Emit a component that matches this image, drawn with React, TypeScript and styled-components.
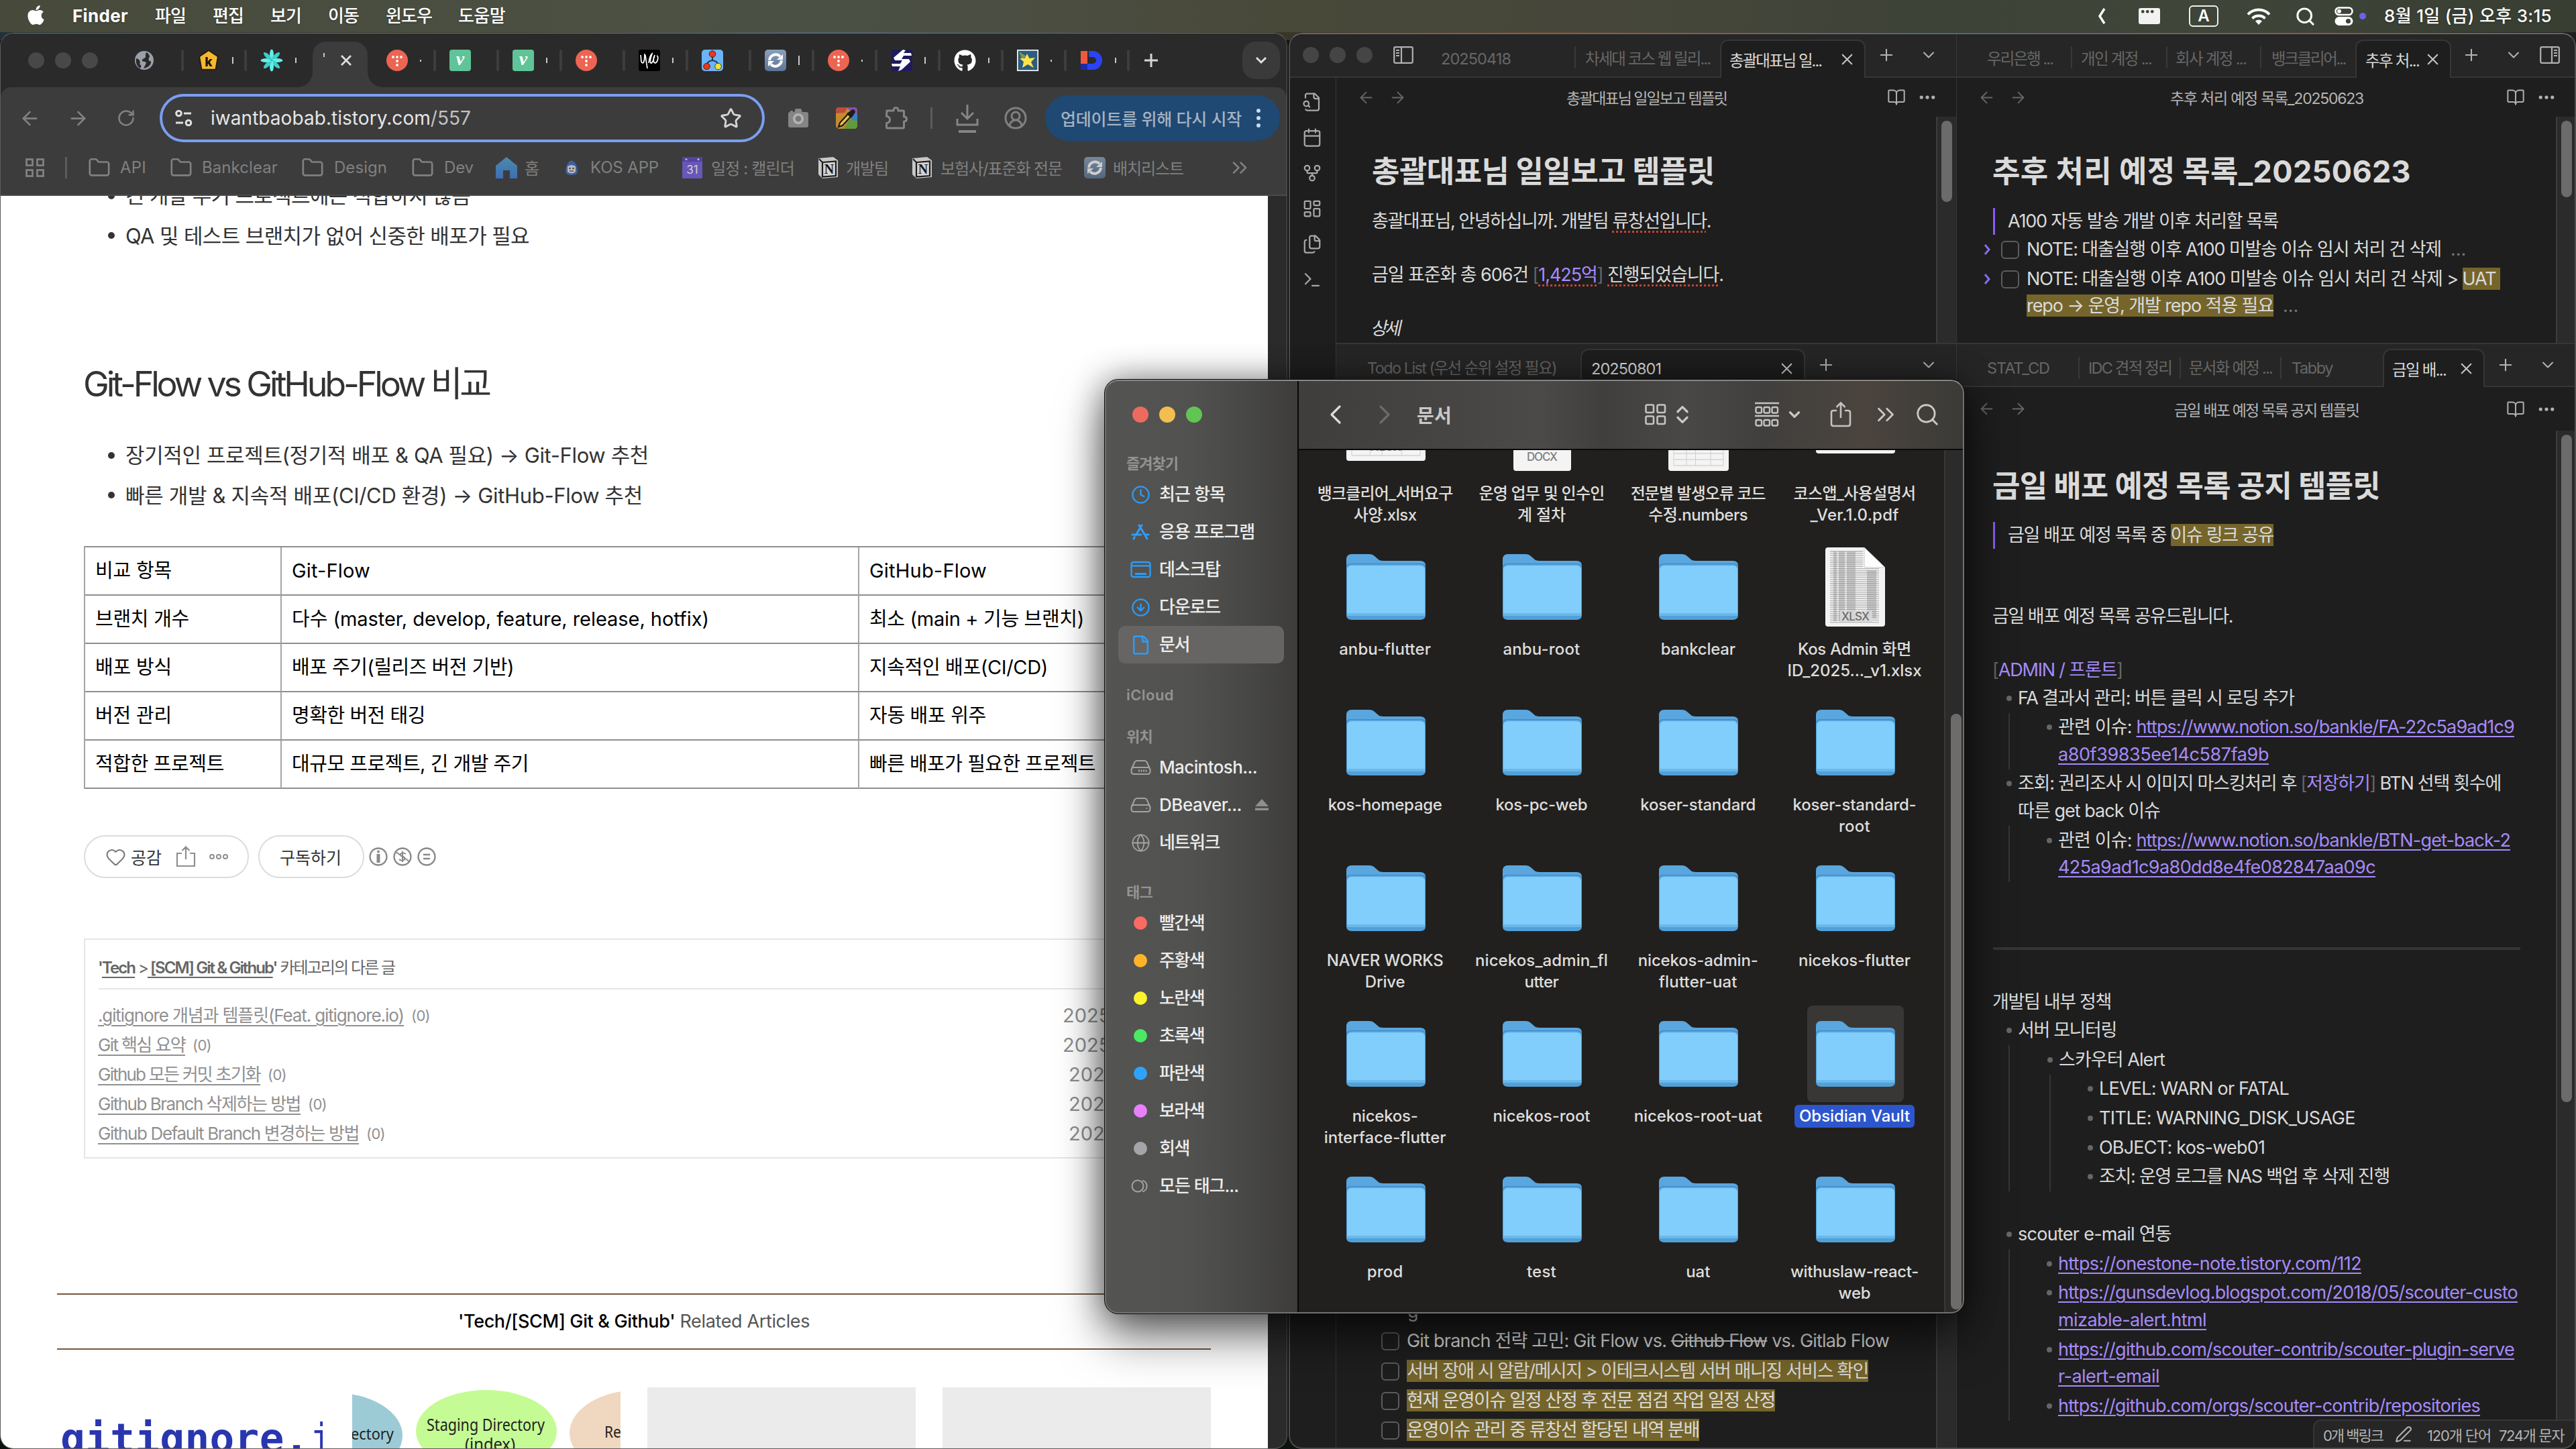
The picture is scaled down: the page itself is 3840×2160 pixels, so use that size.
import React, { useLayoutEffect, useRef, useState, ReactNode } from 'react';
import styled, { createGlobalStyle, css } from 'styled-components';
import {
  ArrowLeft, ArrowRight, BookOpen, Calendar, ChevronDown, ChevronLeft, ChevronRight, ChevronsRight,
  ChevronsUpDown, CircleArrowDown, CircleUserRound, Clock, Ellipsis, File, Files, Folder,
  GitFork, Globe, Heart, LayoutDashboard, Plus, RotateCw, Search,
  Star, Terminal, X, PenLine,
} from 'lucide-react';
import { FaApple, FaGithub } from 'react-icons/fa';

const Global = createGlobalStyle`
  * { box-sizing: border-box; }
  html, body { margin: 0; padding: 0; background: #161c1a; overflow: hidden; }
  body { font-family: Inter, "Noto Sans CJK KR", "Noto Sans", sans-serif; font-kerning: normal; }
  svg { display: block; flex: none; }
`;

/* ---------- text run tracked to a given measure ---------- */

const Run = styled.span`
  display: inline-block;
  flex: none;
  white-space: pre;
  margin: 0 -1px;
`;

function Fit({ w, children }: { w: number; children: ReactNode }) {
  const ref = useRef<HTMLSpanElement>(null);
  const [tracking, setTracking] = useState(0);
  useLayoutEffect(() => {
    const el = ref.current;
    if (!el) return;
    const natural = el.getBoundingClientRect().width;
    const count = Math.max(1, (el.textContent || '').length);
    setTracking((w + 2 - natural) / count);
  }, []);
  return <Run ref={ref} style={{ letterSpacing: `${tracking}px` }}>{children}</Run>;
}

/* ---------- shared parts ---------- */

const Desktop = styled.div`
  position: relative;
  width: 3840px;
  height: 2160px;
  overflow: hidden;
  background: linear-gradient(90deg, #22303a 0, #3f3a2a 20%, #47616e 32%, #3a3527 50%, #6b4528 60%, #2c3b40 75%, #4a3d2c 90%, #1c2022 100%) 0 0 / 100% 60px no-repeat, #0d140f;
`;

const Cell = styled.div<{ $ml?: number; $w?: number }>`
  display: flex;
  flex: none;
  align-items: center;
  justify-content: center;
  width: ${(p) => p.$w ?? 40}px;
  height: 40px;
  margin-left: ${(p) => p.$ml ?? 0}px;
`;

const EndCell = styled(Cell)`
  margin-left: auto;
`;

const Gap = styled.div<{ $w: number }>`
  flex: none;
  width: ${(p) => p.$w}px;
`;

const Space = styled.div<{ $h: number }>`
  flex: none;
  height: ${(p) => p.$h}px;
`;

const Light = styled.div<{ $c: string }>`
  flex: none;
  width: 24px;
  height: 24px;
  border-radius: 50%;
  background: ${(p) => p.$c};
`;

const Lights = styled.div<{ $ml?: number }>`
  display: flex;
  flex: none;
  gap: 16px;
  margin-left: ${(p) => p.$ml ?? 0}px;
`;

/* ---------- menu bar ---------- */

const MenuBar = styled.div`
  display: flex;
  align-items: center;
  height: 48px;
  padding-left: 37px;
  color: #fff;
  font-size: 26px;
  font-weight: 500;
  line-height: 48px;
  background: linear-gradient(90deg, #474a3b 0, #4c5144 26%, #4b5045 33%, #49493a 50%, #46473a 62%, #3e4337 75%, #3f4538 85%, #383e32 100%);
  text-shadow: 0 1px 3px rgba(0, 0, 0, 0.3);
`;

const AppleMark = styled.div`
  width: 33px;
  padding-bottom: 3px;
`;

const AppName = styled.span`
  font-weight: 700;
`;

const InputBox = styled.div`
  display: flex;
  align-items: center;
  justify-content: center;
  width: 44px;
  height: 32px;
  border: 2px solid #eee;
  border-radius: 6px;
  font-size: 24px;
  font-weight: 600;
  line-height: 28px;
`;

function Menu() {
  return (
    <MenuBar>
      <AppleMark><FaApple size={33} /></AppleMark>
      <Gap $w={39} />
      <AppName><Fit w={81}>Finder</Fit></AppName>
      <Gap $w={42} /><Fit w={44}>파일</Fit>
      <Gap $w={42} /><Fit w={44}>편집</Fit>
      <Gap $w={42} /><Fit w={44}>보기</Fit>
      <Gap $w={42} /><Fit w={44}>이동</Fit>
      <Gap $w={42} /><Fit w={67}>윈도우</Fit>
      <Gap $w={41} /><Fit w={68}>도움말</Fit>
      <Gap $w={2361} />
      <Cell>
        <svg width="14" height="26" viewBox="0 0 14 26" fill="none" stroke="#fff" strokeWidth="3.4"><path d="M11 2 L4 13 L11 24" /></svg>
      </Cell>
      <Cell $ml={31}>
        <svg width="34" height="28" viewBox="0 0 34 28"><rect x="1" y="2" width="32" height="24" rx="3" fill="#f2f2f0" />{[7, 14, 21].map((x) => <rect key={x} x={x - 2} y="5" width="4.5" height="4.5" rx="2" fill="#3b4035" />)}</svg>
      </Cell>
      <Gap $w={39} />
      <InputBox>A</InputBox>
      <Cell $ml={40}>
        <svg width="38" height="28" viewBox="0 0 38 28" fill="none" stroke="#fff" strokeWidth="4">
          <path d="M3 11.5 A22 22 0 0 1 35 11.5" /><path d="M9.5 17.5 A13.5 13.5 0 0 1 28.5 17.5" /><path d="M19 27 L14 21.5 A7 7 0 0 1 24 21.5 Z" fill="#fff" stroke="none" />
        </svg>
      </Cell>
      <Cell $ml={29}><Search size={31} strokeWidth={2.3} /></Cell>
      <Cell $ml={18}>
        <svg width="28" height="28" viewBox="0 0 28 28"><rect x="1.5" y="1.5" width="25" height="10.5" rx="5.2" fill="none" stroke="#fff" strokeWidth="2.6" /><circle cx="7" cy="6.8" r="3" fill="#fff" /><rect x="0.5" y="15" width="27" height="13" rx="6.5" fill="#fff" /><circle cx="20.5" cy="21.5" r="3.6" fill="#3d4237" /></svg>
      </Cell>
      <Gap $w={3} />
      <svg width="10" height="12"><ellipse cx="5" cy="6" rx="5" ry="5" fill="#6a62ee" /></svg>
      <Gap $w={28} />
      <Fit w={248}>8월 1일 (금) 오후 3:15</Fit>
    </MenuBar>
  );
}

/* ---------- browser ---------- */

const ChromeWindow = styled.div`
  position: absolute;
  left: 0;
  top: 49px;
  display: flex;
  flex-direction: column;
  width: 1919px;
  height: 2111px;
  border-radius: 20px;
  overflow: hidden;
  background: #2b2b2b;
  border: 1px solid #5c5c5c;
  border-top-color: #707070;
`;

const TabStrip = styled.div`
  display: flex;
  align-items: center;
  flex: none;
  height: 80px;
  padding-left: 41px;
  background: #2a2a2a;
`;

const BrowserTab = styled.div`
  display: flex;
  flex: none;
  align-items: center;
  width: 94px;
  height: 32px;
  padding-left: 22px;
`;

const TabSliver = styled.div<{ $h: number; $active?: boolean }>`
  width: 2px;
  height: ${(p) => p.$h}px;
  margin: ${(p) => (p.$active ? '-16px 0 0 0' : '0 0 0 18px')};
  background: #c8c8c8;
`;

const TabDivider = styled.div`
  width: 4px;
  height: 32px;
  margin: 0 -2px 0 auto;
  border-radius: 2px;
  background: #3d3d3d;
`;

const ActiveBrowserTab = styled.div`
  position: relative;
  display: flex;
  flex: none;
  align-items: center;
  align-self: flex-end;
  width: 82px;
  height: 68px;
  margin: 0 6px;
  padding: 0 0 12px 16px;
  border-radius: 20px 20px 0 0;
  background: #3c3c3c;
  &::before, &::after {
    content: '';
    position: absolute;
    bottom: 0;
    width: 22px;
    height: 22px;
  }
  &::before { left: -22px; background: radial-gradient(circle at 0 0, transparent 21.5px, #3c3c3c 22px); }
  &::after { right: -22px; background: radial-gradient(circle at 100% 0, transparent 21.5px, #3c3c3c 22px); }
`;

const TabSearch = styled.div`
  display: flex;
  align-items: center;
  justify-content: center;
  width: 56px;
  height: 56px;
  margin-left: 116px;
  border-radius: 20px;
  background: #3a3a3a;
`;

const ToolBar = styled.div`
  display: flex;
  align-items: center;
  flex: none;
  height: 92px;
  padding-left: 23px;
  border-radius: 16px 16px 0 0;
  background: #3c3c3c;
  color: #808080;
`;

const Omnibox = styled.div`
  display: flex;
  align-items: center;
  flex: none;
  width: 902px;
  height: 72px;
  margin-left: 30px;
  border: 4px solid #7a9ef2;
  border-radius: 36px;
  color: #e6e6e6;
  font-size: 28px;
  line-height: 40px;
  em { font-style: normal; color: #c2c2c2; }
`;

const BarDivider = styled.div<{ $ml: number }>`
  width: 3px;
  height: 32px;
  margin-left: ${(p) => p.$ml}px;
  background: #5c5c5c;
`;

const UpdateButton = styled.div`
  display: flex;
  align-items: center;
  width: 350px;
  height: 68px;
  margin-left: 24px;
  padding-left: 24px;
  border-radius: 34px;
  background: #1f4873;
  color: #a5b3c2;
  font-size: 25px;
  font-weight: 500;
`;

const BookmarkBar = styled.div`
  display: flex;
  align-items: center;
  flex: none;
  height: 70px;
  padding: 0 0 13px 37px;
  border-bottom: 2px solid #4a4a4a;
  background: #3c3c3c;
  color: #808080;
  font-size: 24px;
`;

const Tistory = () => (
  <svg width="32" height="32" viewBox="0 0 32 32"><circle cx="16" cy="16" r="16" fill="#ec6552" />{[[10, 11], [16, 11], [22, 11], [16, 17], [16, 23]].map(([x, y]) => <circle key={`${x}-${y}`} cx={x} cy={y} r="1.9" fill="#fff" />)}</svg>
);
const Velog = () => (
  <svg width="32" height="32" viewBox="0 0 32 32"><rect width="32" height="32" rx="4" fill="#5fc497" /><text x="16" y="23" textAnchor="middle" fontFamily="Liberation Serif, serif" fontStyle="italic" fontWeight="700" fontSize="28" fill="#fff">v</text></svg>
);
const Sync = ({ dim }: { dim?: boolean }) => (
  <svg width="32" height="32" viewBox="0 0 32 32" opacity={dim ? 0.75 : 1}>
    <defs><linearGradient id="syncFill" x1="0" y1="0" x2="0" y2="1"><stop offset="0" stopColor="#8ba0bb" /><stop offset="1" stopColor="#5d7596" /></linearGradient></defs>
    <rect width="32" height="32" rx="5" fill="url(#syncFill)" />
    <path d="M7 16 A9.5 9.5 0 0 1 23 10 M25 16 A9.5 9.5 0 0 1 9 22" fill="none" stroke="#fff" strokeWidth="4" />
    <path d="M27 7 V15 H18 Z M5 25 V17 H14 Z" fill="#fff" />
  </svg>
);
const GlobeFav = () => (
  <svg width="30" height="30" viewBox="0 0 30 30"><circle cx="15" cy="15" r="14" fill="#9aa0a8" /><path d="M19 3 C14 6 20 9 15 12 C10 14 11 17 16 17 C20 18 16 22 14 27 C20 26 26 22 25 16 C22 17 21 14 22 11 C25 9 21 5 19 3 Z M3 12 C8 13 10 17 8 21 C12 22 10 25 9 27 C4 24 2 18 3 12 Z" fill="#2a2a2a" /></svg>
);
const KFav = () => (
  <svg width="34" height="34" viewBox="0 0 34 34"><path d="M17 4 L29 12 L26 29 H8 L5 12 Z" fill="#f4b92f" stroke="#2b1b16" strokeWidth="6" strokeLinejoin="round" /><path d="M17 4 L29 12 L26 29 H8 L5 12 Z" fill="#f4b92f" stroke="#f4b92f" strokeWidth="1.5" strokeLinejoin="round" /><text x="17" y="26" textAnchor="middle" fontSize="19" fontWeight="800" fontFamily="Inter, sans-serif" fill="#1e1512">k</text></svg>
);
const FlowerFav = () => (
  <svg width="34" height="34" viewBox="0 0 34 34">{[0, 45, 90, 135, 180, 225, 270, 315].map((a) => <ellipse key={a} cx="17" cy="8.5" rx="3" ry="8" fill={a % 90 ? '#3fcfc9' : '#62efe8'} transform={`rotate(${a} 17 17)`} />)}</svg>
);
const ScribbleFav = () => (
  <svg width="32" height="32" viewBox="0 0 32 32"><rect width="32" height="32" rx="3" fill="#000" /><path d="M3 8 C4 14 3 20 6 20 C9 19 9 12 9 6 M10 8 C11 16 12 22 13 28 M15 20 C16 12 17 8 20 6 C18 12 16 18 18 20 C21 21 23 12 24 8 C21 13 22 20 25 20 C29 18 30 10 27 9" fill="none" stroke="#fff" strokeWidth="1.7" /></svg>
);
const TreeFav = () => (
  <svg width="32" height="32" viewBox="0 0 32 32"><rect width="32" height="32" rx="5" fill="#6cb4f6" /><path d="M16 10 V16 M8 23 Q8 17 16 16 Q24 17 24 23" fill="none" stroke="#1c3c5c" strokeWidth="2" /><circle cx="16" cy="6.5" r="4.8" fill="#e8371f" stroke="#47201c" /><circle cx="7.5" cy="25" r="4.8" fill="#e8371f" stroke="#47201c" /><circle cx="24.5" cy="25" r="4.8" fill="#f0e33b" stroke="#47401c" /></svg>
);
const SFav = () => (
  <svg width="32" height="32" viewBox="0 0 32 32"><rect width="32" height="32" rx="4" fill="#1e1c5c" /><path d="M18 0 L4 12 L6 16 H17 L14 21 H1 L2 25 L14 25 L11 32 L16 30 L29 18 L27 14 H16 L19 9 H31 L30 5 H19 L22 1 Z" fill="#fff" /></svg>
);
const StarFav = () => (
  <svg width="32" height="32" viewBox="0 0 32 32"><rect x="0.8" y="0.8" width="30.4" height="30.4" fill="#2c5d80" stroke="#fff" strokeWidth="1.6" /><path d="M3 3 L14 10 L8 16 Z" fill="#7d9a50" /><path d="M15 6 L18.5 13 L27 12 L21 18.5 L25 27 L16 22 L8 27 L10 18 L4 13 L12 13 Z" fill="#ffe34d" /></svg>
);
const DFav = () => (
  <svg width="34" height="30" viewBox="0 0 34 30"><path d="M1 1 H11 V20 H1 Z" fill="#ef5a3c" /><path d="M1 20 H11 V29 H1 Z" fill="#1b2bb0" /><path d="M13 1 H19 A14 14 0 0 1 19 29 H11 V20 H19 A5 5 0 0 0 19 10 H13 Z" fill="#2b43f5" /></svg>
);
const Notion = () => (
  <svg width="32" height="34" viewBox="0 0 32 34"><path d="M2 3 L24 1 L31 6 V31 L8 33 L2 27 Z" fill="#c8c8c8" /><path d="M8 9 L28 7.5 V29 L8 30.5 Z" fill="#d2d2d2" stroke="#1c1c1c" strokeWidth="2.2" /><path d="M3 4 L8 9" stroke="#1c1c1c" strokeWidth="2" /><text x="18" y="26" textAnchor="middle" fontFamily="Liberation Serif, serif" fontWeight="700" fontSize="20" fill="#161616">N</text></svg>
);
const HomeFav = () => (
  <svg width="32" height="34" viewBox="0 0 32 34"><defs><linearGradient id="homeFill" x1="0" y1="0" x2="0" y2="1"><stop offset="0" stopColor="#4c8aa6" /><stop offset="1" stopColor="#3f6db6" /></linearGradient></defs><path d="M16 1 L32 14 V33 H21 V21 H11 V33 H0 V14 Z" fill="url(#homeFill)" /></svg>
);
const KosFav = () => (
  <svg width="22" height="22" viewBox="0 0 22 22"><path d="M11 0 C17 2 20 9 20 16 C20 20 17 22 11 22 C5 22 2 20 2 16 C2 9 5 2 11 0 Z" fill="#3f5f9e" /><path d="M5 9 Q11 5 17 9 V17 Q11 22 5 17 Z" fill="#b9b9b9" /><circle cx="8.5" cy="12" r="1.2" fill="#333" /><circle cx="13.5" cy="12" r="1.2" fill="#333" /><path d="M8 16 H14" stroke="#555" strokeWidth="1.5" /></svg>
);
const CalFav = () => (
  <svg width="32" height="32" viewBox="0 0 32 32"><rect x="1" width="30" height="32" rx="1" fill="#6857b8" /><rect x="1" width="30" height="7" fill="#5443a0" /><circle cx="7" cy="3.5" r="1.5" fill="#bbb" /><circle cx="25" cy="3.5" r="1.5" fill="#bbb" /><text x="16" y="25" textAnchor="middle" fontSize="17" fontFamily="Inter, sans-serif" fill="#cfcfcf">31</text></svg>
);
const CameraIcon = () => (
  <svg width="32" height="28" viewBox="0 0 32 28"><path d="M4 5 V3 H8 V5 Z M10 5 L12 0 H20 L22 5 H28 Q31 5 31 8 V25 Q31 28 28 28 H4 Q1 28 1 25 V8 Q1 5 4 5 Z" fill="#858585" /><circle cx="16" cy="15" r="6.5" fill="#9b9b9b" stroke="#b4b4b4" strokeWidth="3" /><circle cx="16" cy="15" r="4" fill="#777" /></svg>
);
const PickerIcon = () => (
  <svg width="32" height="32" viewBox="0 0 32 32"><rect width="32" height="32" rx="5" fill="#c58b2a" /><path d="M5 0 H18 L13 8 L0 9 V5 Q0 0 5 0 Z" fill="#bf4b3f" /><path d="M16 0 H27 Q32 0 32 5 V10 L24 8 Z" fill="#8750a8" /><path d="M32 9 V22 L22 18 L26 10 Z" fill="#3d80c4" /><path d="M32 20 V27 Q32 32 27 32 H12 L20 18 Z" fill="#5f9a3c" /><path d="M4 29 L6 23 L18 10 L22 14 L10 27 Z" fill="#e8c24b" stroke="#1d1d1d" strokeWidth="2.2" /><path d="M16 9 L23 16 L26 12 Q30 8 28 4 Q24 2 21 6 Z" fill="#1d1d1d" /></svg>
);
const ExtensionsIcon = () => (
  <svg width="36" height="36" viewBox="0 0 36 36" fill="none" stroke="#858585" strokeWidth="3" strokeLinejoin="round">
    <path d="M4 7 H14 Q14 2.5 17.5 2.5 Q21 2.5 21 7 H28 Q29.500 7 29.500 8.500 V16 Q33.500 16 33.500 19.500 Q33.500 23 29.500 23 V31 Q29.500 33 28 33 H5 Q3.500 33 3.500 31 V25.500 Q8.500 25 8.500 20.500 Q8.500 16 3.500 15.500 Z" />
  </svg>
);

const tabsBefore: [ReactNode, number, boolean][] = [
  [<GlobeFav />, 0, true], [<KFav />, 10, true], [<FlowerFav />, 8, false],
];
const tabsAfter: [ReactNode, number][] = [
  [<Tistory />, 3], [<Velog />, 0], [<Velog />, 8], [<Tistory />, 0], [<ScribbleFav />, 8], [<TreeFav />, 0],
  [<Sync />, 14], [<Tistory />, 3], [<SFav />, 10], [<FaGithub size={33} color="#fff" />, 8], [<StarFav />, 3], [<DFav />, 8],
];

const bookmarks: [ReactNode, number, number, number, string][] = [
  [<Folder size={34} strokeWidth={1.9} />, 32, 16, 37, 'API'],
  [<Folder size={34} strokeWidth={1.9} />, 37, 16, 111, 'Bankclear'],
  [<Folder size={34} strokeWidth={1.9} />, 37, 17, 77, 'Design'],
  [<Folder size={34} strokeWidth={1.9} />, 38, 17, 42, 'Dev'],
  [<HomeFav />, 34, 12, 19, '홈'],
  [<KosFav />, 34, 13, 100, 'KOS APP'],
  [<CalFav />, 35, 13, 122, '일정 : 캘린더'],
  [<Notion />, 35, 12, 61, '개발팀'],
  [<Notion />, 35, 13, 179, '보험사/표준화 전문'],
  [<Sync dim />, 34, 12, 103, '배치리스트'],
];

const PageArea = styled.div`
  flex: 1;
  width: 1889px;
  min-height: 0;
  overflow: hidden;
  background: #fff;
`;

const Article = styled.div`
  display: flex;
  flex-direction: column;
  margin-top: -30px;
  padding-left: 124px;
  color: #333;
`;

const Bullet = styled.div`
  display: flex;
  align-items: center;
  flex: none;
  height: 59.5px;
  padding-left: 36px;
  font-size: 31px;
  line-height: 59px;
  &::before {
    content: '';
    width: 10px;
    height: 10px;
    margin-right: 17px;
    border-radius: 50%;
    background: #333;
  }
`;

const Heading = styled.div`
  height: 80px;
  margin: 152px 0 36px;
  font-size: 52px;
  line-height: 80px;
  color: #333;
`;

const Table = styled.div`
  display: grid;
  grid-template-columns: 293px 861px 480px;
  width: 1636px;
  margin-top: 46px;
  border-left: 2px solid #a5a5a5;
  border-top: 2px solid #8e8e8e;
`;

const Td = styled.div`
  height: 72px;
  padding-left: 16px;
  border-right: 2px solid #a5a5a5;
  border-bottom: 2px solid #8e8e8e;
  color: #000;
  font-size: 29px;
  line-height: 70px;
`;

const Actions = styled.div`
  display: flex;
  align-items: center;
  height: 64px;
  margin-top: 69px;
  color: #333;
  font-size: 25px;
`;

const Pill = styled.div<{ $w: number; $pl: number; $mr: number }>`
  display: flex;
  align-items: center;
  width: ${(p) => p.$w}px;
  height: 64px;
  margin-right: ${(p) => p.$mr}px;
  padding-left: ${(p) => p.$pl}px;
  border: 2px solid #dcdcdc;
  border-radius: 32px;
`;

const CategoryBox = styled.div`
  width: 1640px;
  height: 328px;
  margin-top: 90px;
  padding: 0 20px;
  border: 2px solid #e5e5e5;
`;

const CategoryTitle = styled.div`
  height: 74px;
  margin-bottom: 17px;
  padding-top: 20px;
  border-bottom: 2px solid #e5e5e5;
  color: #666;
  font-size: 24px;
  line-height: 44px;
  b { font-weight: 600; }
  u { font-weight: 600; text-underline-offset: 5px; text-decoration-thickness: 2px; }
`;

const CategoryRow = styled.div`
  display: flex;
  align-items: center;
  height: 44px;
  color: #909090;
  font-size: 26px;
  line-height: 44px;
  u { text-underline-offset: 5px; text-decoration-thickness: 2px; }
  small { margin-left: 13px; font-size: 22px; }
`;

const PostDate = styled.span<{ $w: number }>`
  width: ${(p) => p.$w}px;
  margin-left: auto;
  color: #8d8d8d;
  font-size: 29px;
`;

const Related = styled.div`
  width: 1720px;
  height: 84px;
  margin: 201px 0 56px -40px;
  border-top: 2px solid #75583f;
  border-bottom: 2px solid #75583f;
  color: #555;
  font-size: 27px;
  line-height: 80px;
  text-align: center;
  b { color: #000; font-weight: 500; }
`;

const Thumbs = styled.div`
  display: flex;
  gap: 40px;
  height: 300px;
  margin-left: -40px;
`;

const Thumb = styled.div<{ $bg?: string }>`
  flex: none;
  width: 400px;
  height: 300px;
  overflow: hidden;
  background: ${(p) => p.$bg ?? '#fff'};
`;

const GitIgnore = styled.div`
  width: 390px;
  margin: 34px 0 0 6px;
  overflow: hidden;
  color: #2936b0;
  font-family: "DejaVu Sans Mono", monospace;
  font-size: 61px;
  font-weight: 700;
  line-height: 84px;
  span span { font-weight: 400; }
`;

const rows: [number, string][][] = [
  [[112, '비교 항목'], [115, 'Git-Flow'], [173, 'GitHub-Flow']],
  [[138, '브랜치 개수'], [620, '다수 (master, develop, feature, release, hotfix)'], [318, '최소 (main + 기능 브랜치)']],
  [[112, '배포 방식'], [329, '배포 주기(릴리즈 버전 기반)'], [264, '지속적인 배포(CI/CD)']],
  [[112, '버전 관리'], [197, '명확한 버전 태깅'], [172, '자동 배포 위주']],
  [[190, '적합한 프로젝트'], [351, '대규모 프로젝트, 긴 개발 주기'], [335, '빠른 배포가 필요한 프로젝트']],
];

const posts: [number, string, number][] = [
  [454, '.gitignore 개념과 템플릿(Feat. gitignore.io)', 0],
  [128, 'Git 핵심 요약', 0],
  [240, 'Github 모든 커밋 초기화', 9],
  [300, 'Github Branch 삭제하는 방법', 9],
  [387, 'Github Default Branch 변경하는 방법', 9],
];

const Cc = ({ children }: { children: ReactNode }) => (
  <svg width="36" height="30" viewBox="-18 -15 36 30" fill="none" stroke="#8a8a8a" strokeWidth="2.4"><circle r="12.5" />{children}</svg>
);

function Browser() {
  return (
    <ChromeWindow>
      <TabStrip>
        <Lights>{[0, 1, 2].map((i) => <Light key={i} $c="#484848" />)}</Lights>
        <Gap $w={32} />
        {tabsBefore.map(([icon, sliver, divider], i) => (
          <BrowserTab key={i}>{icon}{sliver > 0 && <TabSliver $h={sliver} />}{divider && <TabDivider />}</BrowserTab>
        ))}
        <ActiveBrowserTab>
          <TabSliver $h={6} $active />
          <Gap $w={18} />
          <svg width="28" height="28" viewBox="0 0 28 28" stroke="#e0e0e0" strokeWidth="2.8"><path d="M7 7 L21 21 M21 7 L7 21" /></svg>
        </ActiveBrowserTab>
        {tabsAfter.map(([icon, sliver], i) => (
          <BrowserTab key={i}>{icon}{sliver > 0 && <TabSliver $h={sliver} />}<TabDivider /></BrowserTab>
        ))}
        <Cell $ml={14}><svg width="22" height="22" stroke="#d6d6d6" strokeWidth="3"><path d="M11 1 V21 M1 11 H21" /></svg></Cell>
        <TabSearch><svg width="18" height="12" fill="none" stroke="#dedede" strokeWidth="3"><path d="M2 2 L9 9 L16 2" /></svg></TabSearch>
      </TabStrip>
      <ToolBar>
        <Cell><ArrowLeft size={33} strokeWidth={2} /></Cell>
        <Cell $ml={32}><ArrowRight size={33} strokeWidth={2} /></Cell>
        <Cell $ml={32}><RotateCw size={28} strokeWidth={2.2} /></Cell>
        <Omnibox>
          <Cell $ml={12}>
            <svg width="26" height="26" viewBox="0 0 26 26" fill="none" stroke="#e0e0e0" strokeWidth="3"><circle cx="5.5" cy="6" r="3.8" /><path d="M13 6 H24 M1 20 H12" /><circle cx="20" cy="20" r="3.8" /></svg>
          </Cell>
          <Gap $w={21} />
          <Fit w={386}>iwantbaobab.tistory.com<em>/557</em></Fit>
          <Gap $w={368} />
          <Cell><Star size={33} strokeWidth={2.1} color="#d4d4d4" /></Cell>
        </Omnibox>
        <Cell $ml={30}><CameraIcon /></Cell>
        <Cell $ml={32}><PickerIcon /></Cell>
        <Cell $ml={34}><ExtensionsIcon /></Cell>
        <BarDivider $ml={31} />
        <Cell $ml={32}>
          <svg width="34" height="44" viewBox="0 0 34 44" fill="none" stroke="#858585" strokeWidth="3"><path d="M17 2 V22 M8 14 L17 23 L26 14 M2 23 V32 H32 V23" /><path d="M4 42 H30" strokeWidth="4" /></svg>
        </Cell>
        <Cell $ml={32}><CircleUserRound size={36} strokeWidth={2} /></Cell>
        <UpdateButton>
          <Fit w={268}>업데이트를 위해 다시 시작</Fit>
          <Gap $w={21} />
          <svg width="10" height="30" fill="#c9dbf2"><circle cx="5" cy="4" r="3" /><circle cx="5" cy="15" r="3" /><circle cx="5" cy="26" r="3" /></svg>
        </UpdateButton>
      </ToolBar>
      <BookmarkBar>
        <svg width="28" height="28" fill="none" stroke="#808080" strokeWidth="2.8"><rect x="1.5" y="1.5" width="9" height="9" /><rect x="17.5" y="1.5" width="9" height="9" /><rect x="1.5" y="17.5" width="9" height="9" /><rect x="17.5" y="17.5" width="9" height="9" /></svg>
        <BarDivider $ml={31} />
        {bookmarks.map(([icon, ml, gap, w, label], i) => (
          <React.Fragment key={i}>
            <Cell $w={32} $ml={ml}>{icon}</Cell>
            <Gap $w={gap} />
            <Fit w={w}>{label}</Fit>
          </React.Fragment>
        ))}
        <Cell $ml={65}><ChevronsRight size={36} strokeWidth={1.7} /></Cell>
      </BookmarkBar>
      <PageArea>
        <Article>
          <Bullet><Fit w={512}>긴 개발 주기 프로젝트에는 적합하지 않음</Fit></Bullet>
          <Bullet><Fit w={600}>QA 및 테스트 브랜치가 없어 신중한 배포가 필요</Fit></Bullet>
          <Heading><Fit w={603}>Git-Flow vs GitHub-Flow 비교</Fit></Heading>
          <Bullet><Fit w={778}>장기적인 프로젝트(정기적 배포 &amp; QA 필요) → Git-Flow 추천</Fit></Bullet>
          <Bullet><Fit w={769}>빠른 개발 &amp; 지속적 배포(CI/CD 환경) → GitHub-Flow 추천</Fit></Bullet>
          <Table>
            {rows.flatMap((r, i) => r.map(([w, t], j) => <Td key={`${i}-${j}`}><Fit w={w}>{t}</Fit></Td>))}
          </Table>
          <Actions>
            <Pill $w={246} $pl={30} $mr={14}>
              <Heart size={31} strokeWidth={1.6} color="#777" />
              <Gap $w={8} />
              <Fit w={44}>공감</Fit>
              <Gap $w={22} />
              <svg width="30" height="32" viewBox="0 0 30 32" fill="none" stroke="#8f8f8f" strokeWidth="2.2"><path d="M15 20 V2 M9.5 7 L15 1.5 L20.5 7 M9 11 H2 V30 H28 V11 H21" /></svg>
              <Gap $w={19} />
              <svg width="30" height="10" fill="none" stroke="#8f8f8f" strokeWidth="2"><circle cx="5" cy="5" r="3" /><circle cx="15" cy="5" r="3" /><circle cx="25" cy="5" r="3" /></svg>
            </Pill>
            <Pill $w={158} $pl={31} $mr={3}><Fit w={90}>구독하기</Fit></Pill>
            <Cc><circle cy="-7.5" r="2" fill="#8a8a8a" stroke="none" /><path d="M0 -4 V9" strokeWidth="5" /></Cc>
            <Cc><path d="M-10 -7 L10 7 M5 -4 Q0 -7 -3 -4 Q-4 -1 1 0 Q5 2 2 5 Q-2 7 -5 4 M0 -8 V8" strokeWidth="2" /></Cc>
            <Cc><path d="M-5 -3 H5 M-5 3 H5" strokeWidth="2.6" /></Cc>
          </Actions>
          <CategoryBox>
            <CategoryTitle><Fit w={440}><b>'</b><u>Tech</u> &gt;<u> [SCM] Git &amp; Github</u><b>'</b> 카테고리의 다른 글</Fit></CategoryTitle>
            {posts.map(([w, title, shift]) => (
              <CategoryRow key={title}>
                <Fit w={w}><u>{title}</u></Fit>
                <small><Fit w={26}>(0)</Fit></small>
                <PostDate $w={159 - shift}>2025</PostDate>
              </CategoryRow>
            ))}
          </CategoryBox>
          <Related><Fit w={522}><b>'Tech/[SCM] Git &amp; Github'</b> Related Articles</Fit></Related>
          <Thumbs>
            <Thumb><GitIgnore><Fit w={406}>gitignore.<span>i</span></Fit></GitIgnore></Thumb>
            <Thumb>
              <svg width="400" height="300" fontFamily="Noto Sans, sans-serif" fill="#222">
                <ellipse cx="-28" cy="72" rx="103" ry="64" fill="#9ccbd6" />
                <ellipse cx="200" cy="65" rx="105" ry="61" fill="#c5fb94" />
                <ellipse cx="427" cy="68" rx="103" ry="64" fill="#f0d7bf" />
                <text x="-2" y="78" fontSize="23" textLength="64" lengthAdjust="spacingAndGlyphs">ectory</text>
                <text x="111" y="65" fontSize="26" textLength="176" lengthAdjust="spacingAndGlyphs">Staging Directory</text>
                <text x="168" y="94" fontSize="26" textLength="75" lengthAdjust="spacingAndGlyphs">(index)</text>
                <text x="376" y="75" fontSize="24" textLength="25" lengthAdjust="spacingAndGlyphs">Re</text>
              </svg>
            </Thumb>
            <Thumb $bg="#ebebeb" />
            <Thumb $bg="#ebebeb" />
          </Thumbs>
        </Article>
      </PageArea>
    </ChromeWindow>
  );
}

/* ---------- notes app ---------- */

const NotesWindow = styled.div`
  position: absolute;
  left: 1921px;
  top: 49px;
  display: flex;
  width: 1919px;
  height: 2111px;
  border-radius: 20px;
  overflow: hidden;
  background: #1e1e1e;
  color: #dadada;
  &::after {
    content: '';
    position: absolute;
    inset: 0;
    border: 2px solid #4e4e4e;
    border-top-color: #666;
    border-radius: 20px;
  }
`;

const Column = styled.div<{ $w?: number }>`
  display: flex;
  flex-direction: column;
  flex: ${(p) => (p.$w ? 'none' : '1')};
  width: ${(p) => (p.$w ? `${p.$w}px` : 'auto')};
  min-width: 0;
  & + & { border-left: 1px solid #363636; }
`;

const Split = styled.div`
  display: flex;
  flex: 1;
  min-height: 0;
`;

const TabHeader = styled.div<{ $lower?: boolean }>`
  display: flex;
  align-items: center;
  flex: none;
  height: ${(p) => (p.$lower ? 66 : 67)}px;
  background: #262626;
  border-bottom: 2px solid #363636;
  ${(p) => p.$lower && css`border-top: 2px solid #363636;`}
  color: #b3b3b3;
  font-size: 23.5px;
`;

const TabLabel = styled.div`
  align-self: flex-end;
  flex: none;
  height: 53px;
  color: #666;
  line-height: 53px;
`;

const TabRule = styled.div<{ $ml: number }>`
  flex: none;
  width: 2px;
  height: 33px;
  margin: 8px 0 0 ${(p) => p.$ml}px;
  background: #383838;
`;

const ActiveTab = styled.div<{ $w: number; $pl: number; $ml: number }>`
  display: flex;
  align-items: center;
  align-self: flex-end;
  flex: none;
  width: ${(p) => p.$w}px;
  height: 57px;
  margin: 0 0 -2px ${(p) => p.$ml}px;
  padding: 0 6px 0 ${(p) => p.$pl - 2}px;
  border: 2px solid #363636;
  border-bottom: 0;
  border-radius: 12px 12px 0 0;
  background: #1e1e1e;
  color: #dadada;
`;

const Ribbon = styled.div`
  display: flex;
  flex-direction: column;
  align-items: center;
  flex: none;
  gap: 13px;
  width: 71px;
  padding-top: 16px;
  border-right: 1px solid #363636;
  color: #a8a8a8;
`;

const NoteHeader = styled.div<{ $h?: number }>`
  display: flex;
  align-items: center;
  flex: none;
  height: ${(p) => p.$h ?? 58}px;
  color: #b5b5b5;
  font-size: 23px;
`;

const NoteBody = styled.div<{ $h?: number }>`
  display: flex;
  flex: ${(p) => (p.$h ? 'none' : '1')};
  height: ${(p) => (p.$h ? `${p.$h}px` : 'auto')};
  min-height: 0;
  overflow: hidden;
`;

const NoteText = styled.div<{ $pl: number; $pt: number; $end?: boolean }>`
  display: flex;
  flex: 1;
  flex-direction: column;
  justify-content: ${(p) => (p.$end ? 'flex-end' : 'flex-start')};
  min-width: 0;
  padding: ${(p) => p.$pt}px 0 ${(p) => (p.$end ? 6 : 0)}px ${(p) => p.$pl}px;
  font-size: 27px;
  line-height: 40.5px;
  a { color: #a68af9; text-decoration: underline; text-decoration-thickness: 2px; text-underline-offset: 4px; }
  i { font-style: normal; color: #666; }
  b { font-weight: 400; color: #a68af9; }
  mark { background: #75652b; color: inherit; }
`;

const Track = styled.div`
  flex: none;
  width: 30px;
  padding-left: 6px;
  border-left: 2px solid #3d3d3d;
  background: #2b2b2b;
`;

const ScrollThumb = styled.div<{ $h: number }>`
  width: 16px;
  height: ${(p) => p.$h}px;
  margin-top: 6px;
  border-radius: 8px;
  background: #6b6b6b;
`;

const Title = styled.div`
  flex: none;
  height: 60px;
  font-size: 45px;
  font-weight: 700;
  line-height: 60px;
`;

const P = styled.div<{ $mt?: number; $italic?: boolean }>`
  flex: none;
  height: 40px;
  margin-top: ${(p) => p.$mt ?? 0}px;
  line-height: 40px;
  ${(p) => p.$italic && css`transform: skewX(-12deg); transform-origin: 0 50%;`}
`;

const Quote = styled.div<{ $mt: number }>`
  flex: none;
  height: 40px;
  margin-top: ${(p) => p.$mt}px;
  padding-left: 20px;
  border-left: 3px solid #8a5cf5;
  line-height: 40px;
`;

const Spell = styled.span`
  text-decoration: underline dotted #c9412f;
  text-decoration-thickness: 3px;
  text-underline-offset: 5px;
  text-decoration-skip-ink: none;
`;

const Task = styled.div<{ $ml: number }>`
  display: flex;
  align-items: flex-start;
  flex: none;
  margin-left: ${(p) => p.$ml}px;
  padding: 1.8px 0;
`;

const FoldArrow = styled.div`
  display: flex;
  align-items: center;
  justify-content: center;
  width: 20px;
  height: 40px;
  margin-right: 11px;
`;

const CheckBox = styled.div`
  flex: none;
  width: 27px;
  height: 27px;
  margin: 7px 12px 0 0;
  border: 2px solid #5c5c5c;
  border-radius: 6px;
`;

const Lines = styled.div`
  display: flex;
  flex-direction: column;
  align-items: flex-start;
`;

const List = styled.div<{ $guide?: number }>`
  flex: none;
  ${(p) => p.$guide && css`margin-left: ${p.$guide}px; border-left: 2px solid #363636;`}
`;

const Item = styled.div<{ $pl: number }>`
  display: flex;
  padding: 1.6px 0;
  &::before {
    content: '';
    flex: none;
    width: 8px;
    height: 8px;
    margin: 16px 10px 0 ${(p) => p.$pl - 18}px;
    border-radius: 50%;
    background: #666;
  }
`;

const Rule = styled.div`
  flex: none;
  width: 786px;
  height: 4px;
  margin: 97px 0 58px;
  background: #363636;
`;

const Dots = styled.span`
  margin-left: 15px;
  color: #777;
`;

const StatusBar = styled.div`
  position: absolute;
  right: 0;
  bottom: 0;
  display: flex;
  align-items: center;
  width: 392px;
  height: 44px;
  padding-left: 14px;
  border: 2px solid #363636;
  border-radius: 12px 0 0 0;
  background: #262626;
  color: #b3b3b3;
  font-size: 22px;
`;

const Mirror = styled.div`
  transform: scaleX(-1);
`;

const PaneIcon = () => (
  <svg width="30" height="26" viewBox="0 0 30 26" fill="none" stroke="#b0b0b0" strokeWidth="2.2"><rect x="1.2" y="1.2" width="27.6" height="23.6" rx="2" /><path d="M12 1 V25 M4 6 H9 M4 10 H9 M4 14 H9" /></svg>
);

const QuickSwitch = () => (
  <svg width="30" height="30" viewBox="0 0 24 24" fill="none" stroke="currentColor" strokeWidth="1.8" strokeLinecap="round" strokeLinejoin="round">
    <path d="M14 2v4a2 2 0 0 0 2 2h4" /><path d="M4.268 21a2 2 0 0 0 1.727 1H18a2 2 0 0 0 2-2V7l-5-5H6a2 2 0 0 0-2 2v3" /><path d="m9 18-1.500-1.500" /><circle cx="5" cy="14" r="3" />
  </svg>
);

const TabTools = ({ plus, chevron }: { plus: number; chevron: number }) => (
  <>
    <Cell $ml={plus}><Plus size={28} strokeWidth={1.8} /></Cell>
    <Cell $ml={chevron}><ChevronDown size={28} strokeWidth={1.8} /></Cell>
  </>
);

const NoteBar = ({ gap, w, gap2, title, h }: { gap: number; w: number; gap2: number; title: string; h?: number }) => (
  <NoteHeader $h={h}>
    <Cell $ml={24}><ArrowLeft size={27} strokeWidth={1.7} color="#666" /></Cell>
    <Cell $ml={7}><ArrowRight size={27} strokeWidth={1.7} color="#666" /></Cell>
    <Gap $w={gap} />
    <Fit w={w}>{title}</Fit>
    <Cell $ml={gap2}><BookOpen size={28} strokeWidth={1.7} color="#b0b0b0" /></Cell>
    <Cell $ml={6}><Ellipsis size={30} strokeWidth={2.2} color="#b0b0b0" /></Cell>
  </NoteHeader>
);

const CloseX = () => (
  <EndCell><X size={27} strokeWidth={1.9} color="#c4c4c4" /></EndCell>
);

const Fold = () => (
  <FoldArrow><svg width="10" height="18" fill="none" stroke="#8a6cf0" strokeWidth="3"><path d="M2 2 L8 9 L2 16" /></svg></FoldArrow>
);

function Tabs({ items }: { items: [number, number, string, number?][] }) {
  return (
    <>
      {items.map(([ml, w, text, rule]) => (
        <React.Fragment key={text}>
          <Gap $w={ml} />
          <TabLabel><Fit w={w}>{text}</Fit></TabLabel>
          {rule !== undefined && <TabRule $ml={rule} />}
        </React.Fragment>
      ))}
    </>
  );
}

function Notes() {
  return (
    <NotesWindow>
      <Column $w={995}>
        <TabHeader>
          <Gap $w={21} />
          <Lights>{[0, 1, 2].map((i) => <Light key={i} $c="#454545" />)}</Lights>
          <Cell $ml={26}><PaneIcon /></Cell>
          <Tabs items={[[37, 102, '20250418', 96], [15, 184, '차세대 코스 웹 릴리...']]} />
          <ActiveTab $ml={16} $w={217} $pl={15}><Fit w={135}>총괄대표님 일...</Fit><CloseX /></ActiveTab>
          <TabTools plus={11} chevron={23} />
        </TabHeader>
        <Split>
          <Ribbon>
            <Cell><QuickSwitch /></Cell>
            {[Calendar, GitFork, LayoutDashboard, Files, Terminal].map((Icon, i) => (
              <Cell key={i}><Icon size={30} strokeWidth={1.8} /></Cell>
            ))}
          </Ribbon>
          <Column>
            <NoteBar gap={233} w={237} gap2={234} title="총괄대표님 일일보고 템플릿" />
            <NoteBody $h={337}>
              <NoteText $pl={54} $pt={52}>
                <Title><Fit w={509}>총괄대표님 일일보고 템플릿</Fit></Title>
                <P $mt={24}><Fit w={503}>총괄대표님, 안녕하십니까. 개발팀 <Spell>류창선입니다</Spell>.</Fit></P>
                <P $mt={40}><Fit w={522}>금일 표준화 총 606건 <i>[</i><b><Spell>1,425억</Spell></b><i>]</i> <Spell>진행되었습니다</Spell>.</Fit></P>
                <P $mt={40} $italic><Fit w={48}>상세</Fit></P>
              </NoteText>
              <Track><ScrollThumb $h={121} /></Track>
            </NoteBody>
            <TabHeader $lower>
              <Tabs items={[[47, 280, 'Todo List (우선 순위 설정 필요)']]} />
              <ActiveTab $ml={37} $w={335} $pl={17}><Fit w={102}>20250801</Fit><CloseX /></ActiveTab>
              <TabTools plus={11} chevron={113} />
            </TabHeader>
            <NoteBody>
              <NoteText $pl={67} $pt={0} $end>
                <Task $ml={39}><Lines>g</Lines></Task>
                <Task $ml={0}><CheckBox /><Fit w={717}>Git branch 전략 고민: Git Flow vs. <s>Github Flow</s> vs. Gitlab Flow</Fit></Task>
                <Task $ml={0}><CheckBox /><Fit w={686}><mark>서버 장애 시 알람/메시지 &gt; 이테크시스템 서버 매니징 서비스 확인</mark></Fit></Task>
                <Task $ml={0}><CheckBox /><Fit w={547}><mark>현재 운영이슈 일정 산정 후 전문 점검 작업 일정 산정</mark></Fit></Task>
                <Task $ml={0}><CheckBox /><Fit w={434}><mark>운영이슈 관리 중 류창선 할당된 내역 분배</mark></Fit></Task>
              </NoteText>
              <Track />
            </NoteBody>
          </Column>
        </Split>
      </Column>
      <Column>
        <TabHeader>
          <Tabs items={[[46, 96, '우리은행 ...', 28], [14, 103, '개인 계정 ...', 23], [13, 103, '회사 계정 ...', 22], [16, 108, '뱅크클리어...']]} />
          <ActiveTab $ml={16} $w={143} $pl={16}><Fit w={78}>추후 처...</Fit><CloseX /></ActiveTab>
          <TabTools plus={10} chevron={23} />
          <Cell $ml={14}><Mirror><PaneIcon /></Mirror></Cell>
        </TabHeader>
        <NoteBar gap={208} w={286} gap2={208} title="추후 처리 예정 목록_20250623" />
        <NoteBody $h={337}>
          <NoteText $pl={54} $pt={52}>
            <Title><Fit w={622}>추후 처리 예정 목록_20250623</Fit></Title>
            <Quote $mt={24}><Fit w={401}>A100 자동 발송 개발 이후 처리할 목록</Fit></Quote>
            <Task $ml={-19}><Fold /><CheckBox /><Fit w={616}>NOTE: 대출실행 이후 A100 미발송 이슈 임시 처리 건 삭제</Fit><Dots>...</Dots></Task>
            <Task $ml={-19}>
              <Fold /><CheckBox />
              <Lines>
                <Fit w={704}>NOTE: 대출실행 이후 A100 미발송 이슈 임시 처리 건 삭제 &gt; <mark>UAT </mark></Fit>
                <span><Fit w={366}><mark>repo → 운영, 개발 repo 적용 필요</mark></Fit><Dots>...</Dots></span>
              </Lines>
            </Task>
          </NoteText>
          <Track><ScrollThumb $h={114} /></Track>
        </NoteBody>
        <TabHeader $lower>
          <Tabs items={[[46, 91, 'STAT_CD', 44], [14, 122, 'IDC 견적 정리', 13], [13, 122, '문서화 예정 ...', 13], [16, 59, 'Tabby']]} />
          <ActiveTab $ml={76} $w={152} $pl={15}><Fit w={78}>금일 배...</Fit><CloseX /></ActiveTab>
          <TabTools plus={11} chevron={23} />
        </TabHeader>
        <NoteBar gap={214} w={273} gap2={215} h={65} title="금일 배포 예정 목록 공지 템플릿" />
        <NoteBody>
          <NoteText $pl={54} $pt={53}>
            <Title><Fit w={576}>금일 배포 예정 목록 공지 템플릿</Fit></Title>
            <Quote $mt={23}><Fit w={394}>금일 배포 예정 목록 중 <mark>이슈 링크 공유</mark></Fit></Quote>
            <P $mt={81}><Fit w={356}>금일 배포 예정 목록 공유드립니다.</Fit></P>
            <P $mt={40}><Fit w={192}><i>[</i><b>ADMIN / 프론트</b><i>]</i></Fit></P>
            <List>
              <Item $pl={38}><Fit w={410}>FA 결과서 관리: 버튼 클릭 시 로딩 추가</Fit></Item>
              <List $guide={23}>
                <Item $pl={73}><Lines><Fit w={678}>관련 이슈: <a>https://www.notion.so/bankle/FA-22c5a9ad1c9</a></Fit><Fit w={312}><a>a80f39835ee14c587fa9b</a></Fit></Lines></Item>
              </List>
              <Item $pl={38}><Lines><Fit w={718}>조회: 권리조사 시 이미지 마스킹처리 후 <i>[</i><b>저장하기</b><i>]</i> BTN 선택 횟수에</Fit><Fit w={210}>따른 get back 이슈</Fit></Lines></Item>
              <List $guide={23}>
                <Item $pl={73}><Lines><Fit w={672}>관련 이슈: <a>https://www.notion.so/bankle/BTN-get-back-2</a></Fit><Fit w={471}><a>425a9ad1c9a80dd8e4fe082847aa09c</a></Fit></Lines></Item>
              </List>
            </List>
            <Rule />
            <P><Fit w={175}>개발팀 내부 정책</Fit></P>
            <List>
              <Item $pl={38}><Fit w={145}>서버 모니터링</Fit></Item>
              <List $guide={23}>
                <Item $pl={74}><Fit w={156}>스카우터 Alert</Fit></Item>
                <List $guide={59}>
                  <Item $pl={73}><Fit w={281}>LEVEL: WARN or FATAL</Fit></Item>
                  <Item $pl={73}><Fit w={380}>TITLE: WARNING_DISK_USAGE</Fit></Item>
                  <Item $pl={73}><Fit w={245}>OBJECT: kos-web01</Fit></Item>
                  <Item $pl={73}><Fit w={431}>조치: 운영 로그를 NAS 백업 후 삭제 진행</Fit></Item>
                </List>
              </List>
              <Space $h={42} />
              <Item $pl={38}><Fit w={227}>scouter e-mail 연동</Fit></Item>
              <List $guide={23}>
                <Item $pl={73}><Fit w={450}><a>https://onestone-note.tistory.com/112</a></Fit></Item>
                <Item $pl={73}><Lines><Fit w={683}><a>https://gunsdevlog.blogspot.com/2018/05/scouter-custo</a></Fit><Fit w={219}><a>mizable-alert.html</a></Fit></Lines></Item>
                <Item $pl={73}><Lines><Fit w={678}><a>https://github.com/scouter-contrib/scouter-plugin-serve</a></Fit><Fit w={149}><a>r-alert-email</a></Fit></Lines></Item>
                <Item $pl={73}><Fit w={627}><a>https://github.com/orgs/scouter-contrib/repositories</a></Fit></Item>
              </List>
            </List>
          </NoteText>
          <Track><ScrollThumb $h={995} /></Track>
        </NoteBody>
      </Column>
      <StatusBar>
        <Fit w={87}>0개 백링크</Fit>
        <Cell $ml={12}><PenLine size={26} strokeWidth={1.9} /></Cell>
        <Gap $w={16} />
        <Fit w={93}>120개 단어</Fit>
        <Gap $w={14} />
        <Fit w={95}>724개 문자</Fit>
      </StatusBar>
    </NotesWindow>
  );
}

/* ---------- finder ---------- */

const FinderWindow = styled.div`
  position: absolute;
  left: 1647px;
  top: 566px;
  display: flex;
  width: 1281px;
  height: 1392px;
  border-radius: 20px;
  background: #21201e;
  color: #dedddc;
  box-shadow: 0 0 0 1px #0c0c0c, 0 34px 70px rgba(0, 0, 0, 0.55), 0 0 50px rgba(0, 0, 0, 0.45);
  overflow: hidden;
  &::after {
    content: '';
    position: absolute;
    inset: 0;
    border: 2px solid #72716f;
    border-top-color: #878684;
    border-radius: 20px;
  }
`;

const Sidebar = styled.div`
  display: flex;
  flex-direction: column;
  flex: none;
  width: 289px;
  padding-top: 40px;
  border-right: 2px solid #070707;
  background: linear-gradient(90deg, #545453 0, #51514f 45%, #484846 72%, #3d3c3b 100%);
`;

const Section = styled.div<{ $mt: number }>`
  height: 32px;
  margin: ${(p) => p.$mt}px 0 2px 33px;
  color: #949392;
  font-size: 22px;
  font-weight: 600;
  line-height: 32px;
`;

const Place = styled.div<{ $active?: boolean }>`
  display: flex;
  align-items: center;
  height: 56px;
  margin: 0 20px;
  padding-left: 13px;
  border-radius: 10px;
  background: ${(p) => (p.$active ? '#666563' : 'transparent')};
  color: #ececec;
  font-size: 26px;
  font-weight: 500;
  line-height: 56px;
`;

const Main = styled.div`
  display: flex;
  flex: 1;
  flex-direction: column;
  min-width: 0;
`;

const FinderBar = styled.div`
  display: flex;
  align-items: center;
  flex: none;
  height: 105px;
  border-bottom: 2px solid #0b0a0a;
  background: linear-gradient(90deg, #3f3e3d 0, #454443 20%, #4b4a49 36%, #403f3d 46%, #4a4846 58%, #413f3e 70%, #4a443d 85%, #3b3a37 100%);
  color: #c9c8c6;
  font-size: 28px;
  font-weight: 700;
`;

const Contents = styled.div`
  display: flex;
  flex: 1;
  min-height: 0;
  overflow: hidden;
`;

const IconGrid = styled.div`
  display: grid;
  flex: none;
  grid-template-columns: repeat(4, 233.3px);
  grid-auto-rows: 232px;
  width: 962px;
  margin-top: -100px;
  padding-left: 12px;
`;

const Entry = styled.div`
  display: flex;
  flex-direction: column;
  align-items: center;
  font-size: 24px;
  font-weight: 500;
`;

const EntryIcon = styled.div<{ $on?: boolean }>`
  display: flex;
  align-items: center;
  justify-content: center;
  flex: none;
  width: 144px;
  height: 144px;
  margin: 0 0 4px 2px;
  border-radius: 8px;
  background: ${(p) => (p.$on ? '#383735' : 'transparent')};
`;

const EntryLabel = styled.div<{ $on?: boolean }>`
  height: 34px;
  padding: 0 8px;
  border-radius: 6px;
  background: ${(p) => (p.$on ? '#2d56cd' : 'transparent')};
  color: ${(p) => (p.$on ? '#fff' : '#dedddc')};
  line-height: 34px;
  & + & { margin-top: -2px; }
`;

const FinderTrack = styled.div`
  flex: none;
  width: 30px;
  padding: 393px 0 0 8px;
  border-left: 2px solid #393837;
  background: #2c2b2b;
`;

const FinderThumb = styled.div`
  width: 16px;
  height: 888px;
  border-radius: 8px;
  background: #6d6c6b;
`;

const FolderArt = () => (
  <svg width="118" height="100" viewBox="0 0 118 100">
    <path d="M0 9 Q0 1 8 1 H34 Q39 1 42 4 L49 10 Q52 11 56 11 H110 Q118 11 118 18 V90 H0 Z" fill="#5aa6de" />
    <path d="M0 24 Q0 16 8 16 H110 Q118 16 118 24 V20 Q118 15 110 15 H8 Q0 15 0 20 Z" fill="#3f86c8" />
    <path d="M0 24 Q0 17.5 8 17.5 H110 Q118 17.5 118 24 V92 Q118 99 110 99 H8 Q0 99 0 92 Z" fill="#51a0d8" />
    <path d="M1 25 Q1 18 8 18 H110 Q117 18 117 25 V93 H1 Z" fill="#81cdfb" />
    <path d="M1 89 H117 V93 H1 Z" fill="#6bb8ea" />
  </svg>
);

const Sheet = ({ h, w = 118, label, grid }: { h: number; w?: number; label?: string; grid?: boolean }) => (
  <svg width={w} height={h}>
    <rect width={w} height={h} rx="4" fill="#f4f4f4" />
    {grid && [0, 1, 2, 3, 4, 5, 6, 7, 8].map((i) => <path key={i} d={`M8 ${h - 8 - i * 9} H${w - 8}`} stroke="#c4c4c4" />)}
    {grid && [8, w * 0.3, w * 0.45, w * 0.7, w - 8].map((x) => <path key={x} d={`M${x} 8 V${h - 8}`} stroke="#cfcfcf" />)}
    {label && <text x={w / 2} y={h - 15} textAnchor="middle" fontSize="17" textLength="46" fill="#808080">{label}</text>}
  </svg>
);

const XlsxArt = () => (
  <svg width="90" height="118" viewBox="0 0 90 118">
    <path d="M4 0 H58 L89 30 V114 Q89 118 85 118 H4 Q0 118 0 114 V4 Q0 0 4 0 Z" fill="#f2f2f2" />
    {Array.from({ length: 34 }, (_, i) => <path key={i} d={`M7 ${6 + i * 3.2} H${i < 8 ? 56 : 80}`} stroke="#b5b5b5" strokeWidth="1.3" />)}
    {[12, 20, 32, 62].map((x, i) => <rect key={x} x={x} y={i === 3 ? 34 : 6} width={i === 3 ? 14 : 5 + i * 4} height={i === 3 ? 72 : 104} fill="#8c8c8c" opacity="0.4" />)}
    <path d="M58 0 L89 30 H61 Q58 30 58 27 Z" fill="#fdfdfd" stroke="#c9c9c9" />
    <rect x="22" y="94" width="48" height="17" fill="#dcdcdc" opacity="0.8" />
    <text x="45" y="109" textAnchor="middle" fontSize="17" textLength="42" fill="#6c6c6c">XLSX</text>
  </svg>
);

type EntryData = { art?: ReactNode; on?: boolean; lines: [number, string][] };
const entries: EntryData[] = [
  { art: <Sheet h={88} label="XLSX" grid />, lines: [[200, '뱅크클리어_서버요구'], [92, '사양.xlsx']] },
  { art: <Sheet h={118} w={86} label="DOCX" />, lines: [[185, '운영 업무 및 인수인'], [70, '계 절차']] },
  { art: <Sheet h={118} w={90} grid />, lines: [[199, '전문별 발생오류 코드'], [146, '수정.numbers']] },
  { art: <Sheet h={66} />, lines: [[180, '코스앱_사용설명서'], [130, '_Ver.1.0.pdf']] },
  { lines: [[135, 'anbu-flutter']] },
  { lines: [[113, 'anbu-root']] },
  { lines: [[109, 'bankclear']] },
  { art: <XlsxArt />, lines: [[167, 'Kos Admin 화면'], [198, 'ID_2025..._v1.xlsx']] },
  { lines: [[168, 'kos-homepage']] },
  { lines: [[135, 'kos-pc-web']] },
  { lines: [[170, 'koser-standard']] },
  { lines: [[182, 'koser-standard-'], [45, 'root']] },
  { lines: [[172, 'NAVER WORKS'], [58, 'Drive']] },
  { lines: [[196, 'nicekos_admin_fl'], [49, 'utter']] },
  { lines: [[177, 'nicekos-admin-'], [115, 'flutter-uat']] },
  { lines: [[165, 'nicekos-flutter']] },
  { lines: [[96, 'nicekos-'], [180, 'interface-flutter']] },
  { lines: [[143, 'nicekos-root']] },
  { lines: [[189, 'nicekos-root-uat']] },
  { on: true, lines: [[163, 'Obsidian Vault']] },
  { lines: [[52, 'prod']] },
  { lines: [[42, 'test']] },
  { lines: [[34, 'uat']] },
  { lines: [[189, 'withuslaw-react-'], [46, 'web']] },
];

const blue = '#2f9bf5';
const AppsIcon = () => (
  <svg width="28" height="26" viewBox="0 0 28 26" fill="none" stroke={blue} strokeWidth="3.2" strokeLinecap="round"><path d="M16 3 L7 18 M12 3 L24 23 M2 17 H15 M21 17 H26 M5 21 L4 23" /></svg>
);
const DesktopIcon = () => (
  <svg width="31" height="26" viewBox="0 0 31 26" fill="none" stroke={blue} strokeWidth="2.4"><rect x="1.5" y="2" width="28" height="22" rx="3" /><path d="M1 7.5 H30" /><path d="M7 19.5 H24" strokeWidth="3" /></svg>
);
const DriveIcon = ({ vents }: { vents?: boolean }) => (
  <svg width="31" height="24" viewBox="0 0 31 24" fill="none" stroke="#a3a3a2" strokeWidth="2">
    <path d="M1.500 15 L6.500 4 Q7.500 2 10 2 H21 Q23.500 2 24.500 4 L29.500 15 V18 Q29.500 22 25.500 22 H5.500 Q1.500 22 1.500 18 V15 Q2 12 5.500 12 H25.500 Q29 12 29.500 15" />
    {vents ? <path d="M12 17 H25" strokeWidth="3" strokeDasharray="2 1.500" /> : <circle cx="24.500" cy="17" r="1" fill="#a3a3a2" stroke="none" />}
  </svg>
);
const TagsIcon = () => (
  <svg width="28" height="20" viewBox="0 0 28 20" fill="none" stroke="#a3a3a2" strokeWidth="2"><circle cx="10" cy="10" r="8.5" /><path d="M17 1.700 A8.5 8.5 0 0 1 17 18.3" /></svg>
);
const TagDot = ({ c }: { c: string }) => <svg width="20" height="20"><circle cx="10" cy="10" r="10" fill={c} /></svg>;

const favorites: [ReactNode, number, string][] = [
  [<Clock size={29} color={blue} strokeWidth={1.9} />, 96, '최근 항목'],
  [<AppsIcon />, 140, '응용 프로그램'],
  [<DesktopIcon />, 89, '데스크탑'],
  [<CircleArrowDown size={29} color={blue} strokeWidth={1.9} />, 89, '다운로드'],
  [<File size={31} color={blue} strokeWidth={2} />, 43, '문서'],
];
const tags: [string, number, string][] = [
  ['#fb6b62', 65, '빨간색'], ['#fdb429', 65, '주황색'], ['#fdf22e', 65, '노란색'], ['#4be863', 65, '초록색'],
  ['#2fa3fb', 65, '파란색'], ['#e980fb', 65, '보라색'], ['#a5a4a9', 43, '회색'],
];

const PlaceRow = ({ icon, w, text, active, extra }: { icon: ReactNode; w: number; text: string; active?: boolean; extra?: ReactNode }) => (
  <Place $active={active}><Cell>{icon}</Cell><Gap $w={9} /><Fit w={w}>{text}</Fit>{extra}</Place>
);

function Finder() {
  return (
    <FinderWindow>
      <Sidebar>
        <Lights $ml={41}><Light $c="#ec6b5e" /><Light $c="#f4be4f" /><Light $c="#61c553" /></Lights>
        <Section $mt={45}><Fit w={75}>즐겨찾기</Fit></Section>
        {favorites.map(([icon, w, text], i) => <PlaceRow key={text} icon={icon} w={w} text={text} active={i === 4} />)}
        <Section $mt={31}><Fit w={69}>iCloud</Fit></Section>
        <Section $mt={28}><Fit w={37}>위치</Fit></Section>
        <PlaceRow icon={<DriveIcon vents />} w={144} text="Macintosh..." />
        <PlaceRow
          icon={<DriveIcon />} w={121} text="DBeaver..."
          extra={<Cell $ml={11}><svg width="20" height="20" fill="#8f8f8e"><path d="M10 1 L20 12 H0 Z M0 14.5 H20 V18 H0 Z" /></svg></Cell>}
        />
        <PlaceRow icon={<Globe size={29} color="#a3a3a2" strokeWidth={1.5} />} w={88} text="네트워크" />
        <Section $mt={30}><Fit w={37}>태그</Fit></Section>
        {tags.map(([c, w, text]) => <PlaceRow key={text} icon={<TagDot c={c} />} w={w} text={text} />)}
        <PlaceRow icon={<TagsIcon />} w={116} text="모든 태그..." />
      </Sidebar>
      <Main>
        <FinderBar>
          <Cell $ml={35}><ChevronLeft size={48} strokeWidth={1.6} color="#dcdbd9" /></Cell>
          <Cell $ml={33}><ChevronRight size={48} strokeWidth={1.6} color="#6c6b6a" /></Cell>
          <Gap $w={29} />
          <Fit w={50}>문서</Fit>
          <Cell $ml={285}>
            <svg width="32" height="32" fill="none" stroke="#c4c3c1" strokeWidth="2.6"><rect x="1.5" y="1.5" width="11.5" height="11.5" rx="2" /><rect x="18.5" y="1.5" width="11.5" height="11.5" rx="2" /><rect x="1.5" y="18.5" width="11.5" height="11.5" rx="2" /><rect x="18.5" y="18.5" width="11.5" height="11.5" rx="2" /></svg>
          </Cell>
          <Cell><ChevronsUpDown size={34} strokeWidth={2.3} /></Cell>
          <Cell $ml={86}>
            <svg width="36" height="38" fill="none" stroke="#c4c3c1" strokeWidth="2.4"><path d="M0 2 H36 M0 21 H36" />{[1.5, 13.5, 25.5].flatMap((x) => [8, 27].map((y) => <rect key={`${x}-${y}`} x={x} y={y} width="8.5" height="8.5" rx="2" />))}</svg>
          </Cell>
          <Cell $w={30} $ml={6}><ChevronDown size={26} strokeWidth={3} /></Cell>
          <Cell $ml={34}><svg width="32" height="40" viewBox="0 0 32 40" fill="none" stroke="#c4c3c1" strokeWidth="2.6"><path d="M16 25 V3 M9.5 9 L16 2.5 L22.5 9 M10 14 H5 Q2 14 2 17 V34 Q2 37 5 37 H27 Q30 37 30 34 V17 Q30 14 27 14 H22" /></svg></Cell>
          <Cell $ml={27}><ChevronsRight size={42} strokeWidth={1.6} /></Cell>
          <Cell $ml={22}><Search size={38} strokeWidth={1.8} /></Cell>
        </FinderBar>
        <Contents>
          <IconGrid>
            {entries.map((e, i) => (
              <Entry key={i}>
                <EntryIcon $on={e.on}>{e.art ?? <FolderArt />}</EntryIcon>
                {e.lines.map(([w, t]) => <EntryLabel key={t} $on={e.on}><Fit w={w}>{t}</Fit></EntryLabel>)}
              </Entry>
            ))}
          </IconGrid>
          <FinderTrack><FinderThumb /></FinderTrack>
        </Contents>
      </Main>
    </FinderWindow>
  );
}

export default function App() {
  return (
    <>
      <Global />
      <Desktop>
        <Menu />
        <Browser />
        <Notes />
        <Finder />
      </Desktop>
    </>
  );
}
